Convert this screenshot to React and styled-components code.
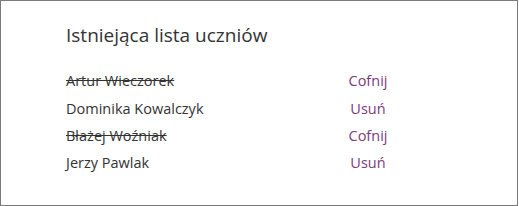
import React from "react";
import styled, { createGlobalStyle } from "styled-components";

const Global = createGlobalStyle`
  html, body { margin: 0; padding: 0; background: #fff; }
  body { font-family: "Open Sans", "Noto Sans", sans-serif; }
`;

const Panel = styled.section`
  box-sizing: border-box;
  width: 518px;
  height: 206px;
  border: 1px solid #7a7a7a;
  padding: 20px 0 0 65px;
  background: #fff;
`;

const Title = styled.h2`
  margin: 0 0 18px;
  font-size: 19px;
  font-weight: 400;
  color: #333;
  line-height: 28px;
`;

const List = styled.ul`
  list-style: none;
  margin: 0;
  padding: 0;
  display: flex;
  flex-direction: column;
`;

const Row = styled.li`
  display: grid;
  grid-template-columns: 263px 78px;
  align-items: center;
  height: 27.4px;
  font-size: 14.5px;
`;

const Name = styled.span`
  color: #333;
  text-decoration: ${(p) => (p.$removed ? "line-through" : "none")};
`;

const Action = styled.button`
  border: 0;
  background: none;
  padding: 0;
  font: inherit;
  color: #80397b;
  text-align: center;
  cursor: pointer;
`;

const students = [
  { name: "Artur Wieczorek", removed: true },
  { name: "Dominika Kowalczyk", removed: false },
  { name: "Błażej Woźniak", removed: true },
  { name: "Jerzy Pawlak", removed: false },
];

export default function App() {
  return (
    <>
      <Global />
      <Panel>
        <Title>Istniejąca lista uczniów</Title>
        <List>
          {students.map((s) => (
            <Row key={s.name}>
              <Name $removed={s.removed}>{s.name}</Name>
              <Action>{s.removed ? "Cofnij" : "Usuń"}</Action>
            </Row>
          ))}
        </List>
      </Panel>
    </>
  );
}
